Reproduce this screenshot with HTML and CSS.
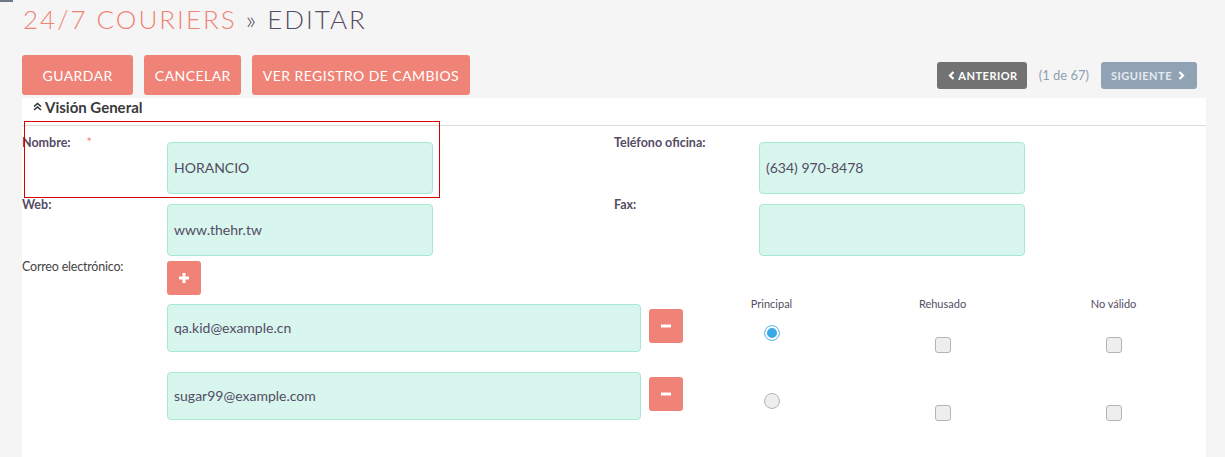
FILE: index.html
```html
<!DOCTYPE html>
<html>
<head>
    <title>24/7 Couriers » Editar</title>
    <link rel="stylesheet" href="styles.css">
</head>
<body>
    <div class="corner"></div>
    <div class="page">
        <h1 class="title"><span class="module">24/7 Couriers</span> <span class="sep">»</span> Editar</h1>

        <div class="toolbar">
            <div class="actions">
                <button class="btn btn-save">Guardar</button>
                <button class="btn">Cancelar</button>
                <button class="btn">Ver registro de cambios</button>
            </div>
            <div class="pager">
                <button class="nav nav-prev">
                    <svg width="7" height="9" viewBox="0 0 7 9"><path d="M5.5 1 L2 4.5 L5.5 8" fill="none" stroke="#fff" stroke-width="2.2"/></svg>
                    Anterior
                </button>
                <span class="count">(1 de 67)</span>
                <button class="nav nav-next">
                    Siguiente
                    <svg width="7" height="9" viewBox="0 0 7 9"><path d="M1.5 1 L5 4.5 L1.5 8" fill="none" stroke="#fff" stroke-width="2.2"/></svg>
                </button>
            </div>
        </div>

        <div class="panel">
            <div class="panel-head">
                <svg width="9" height="9" viewBox="0 0 9 9"><path d="M1 4.5 L4.5 1.5 L8 4.5 M1 8 L4.5 5 L8 8" fill="none" stroke="#333" stroke-width="1.6"/></svg>
                Visión General
            </div>

            <div class="panel-body">
                <div class="fields">
                    <div class="field">
                        <label>Nombre: <span class="req">*</span></label>
                        <div class="input">HORANCIO</div>
                    </div>
                    <div class="field">
                        <label>Teléfono oficina:</label>
                        <div class="input">(634) 970-8478</div>
                    </div>
                    <div class="field">
                        <label>Web:</label>
                        <div class="input">www.thehr.tw</div>
                    </div>
                    <div class="field">
                        <label>Fax:</label>
                        <div class="input"></div>
                    </div>
                </div>

                <div class="email-field">
                    <label>Correo electrónico:</label>
                    <div class="email-content">
                        <button class="icon-btn add">
                            <svg width="12" height="12" viewBox="0 0 12 12"><path d="M6 1 V11 M1 6 H11" stroke="#fff" stroke-width="3"/></svg>
                        </button>
                        <div class="email-list">
                            <div class="email-line">
                                <div class="input email-input">qa.kid@example.cn</div>
                                <button class="icon-btn remove">
                                    <svg width="12" height="4" viewBox="0 0 12 4"><path d="M1 2 H11" stroke="#fff" stroke-width="3"/></svg>
                                </button>
                                <div class="flag">
                                    <div class="flag-head">Principal</div>
                                    <input type="radio" name="primary" class="radio" checked>
                                </div>
                                <div class="flag">
                                    <div class="flag-head">Rehusado</div>
                                    <input type="checkbox" class="check">
                                </div>
                                <div class="flag">
                                    <div class="flag-head">No válido</div>
                                    <input type="checkbox" class="check">
                                </div>
                            </div>
                            <div class="email-line">
                                <div class="input email-input">sugar99@example.com</div>
                                <button class="icon-btn remove">
                                    <svg width="12" height="4" viewBox="0 0 12 4"><path d="M1 2 H11" stroke="#fff" stroke-width="3"/></svg>
                                </button>
                                <div class="flag">
                                    <div class="flag-head"></div>
                                    <input type="radio" name="primary" class="radio">
                                </div>
                                <div class="flag">
                                    <div class="flag-head"></div>
                                    <input type="checkbox" class="check">
                                </div>
                                <div class="flag">
                                    <div class="flag-head"></div>
                                    <input type="checkbox" class="check">
                                </div>
                            </div>
                        </div>
                    </div>
                </div>
            </div>

            <div class="focus-box"></div>
        </div>
    </div>
</body>
</html>
```

FILE: styles.css
```css
body {
    margin: 0;
    background-color: #f5f5f5;
    font-family: Lato, "Open Sans", sans-serif;
    color: #534d64;
}

.corner {
    position: absolute;
    top: 0;
    left: 0;
    width: 13px;
    height: 2px;
    background-color: #6b7886;
}

.page {
    padding: 0 19px 0 22px;
}

.title {
    margin: 0;
    padding-top: 4px;
    padding-left: 1px;
    font-size: 26px;
    line-height: 30px;
    font-weight: 300;
    letter-spacing: 2px;
    text-transform: uppercase;
    color: #534d64;
}

.title .module {
    color: #f08377;
}

.toolbar {
    display: flex;
    justify-content: space-between;
    align-items: center;
    margin-top: 21px;
}

.actions {
    display: flex;
    gap: 11px;
}

.btn {
    height: 40px;
    padding: 0 10.5px;
    border: none;
    border-radius: 3px;
    background-color: #f08377;
    color: #fff;
    font-family: Lato, sans-serif;
    font-size: 14px;
    letter-spacing: 0.45px;
    text-transform: uppercase;
}

.btn-save {
    padding: 0 20.5px;
}

.pager {
    display: flex;
    align-items: center;
    margin-right: 9px;
}

.nav {
    display: flex;
    align-items: center;
    gap: 3px;
    height: 27px;
    padding: 0 9px 0 11px;
    border: none;
    border-radius: 3px;
    color: #fff;
    font-family: Lato, sans-serif;
    font-size: 11px;
    font-weight: bold;
    letter-spacing: 0.5px;
    text-transform: uppercase;
}

.nav-prev {
    background-color: #727272;
}

.nav-next {
    gap: 6px;
    padding: 0 12px 0 10px;
    background-color: #8fa3b5;
    color: #e6ebf0;
}

.count {
    margin: 0 12px;
    font-size: 13px;
    color: #8fa0b3;
}

.panel {
    position: relative;
    margin-top: 3px;
    background-color: #fff;
}

.panel-head {
    display: flex;
    align-items: center;
    gap: 3px;
    height: 28px;
    padding-left: 11px;
    box-sizing: border-box;
    padding-bottom: 10px;
    border-bottom: 1px solid #ddd;
    font-size: 15px;
    font-weight: bold;
    line-height: 18px;
    color: #3a3a3a;
}

.panel-body {
    padding: 9px 0 40px;
}

.fields {
    display: grid;
    grid-template-columns: 592px 1fr;
    row-gap: 3px;
}

.field,
.email-field {
    display: flex;
}

label {
    flex: 0 0 145px;
    font-size: 12.5px;
    font-weight: bold;
    line-height: 16px;
}

.email-field label {
    font-weight: normal;
    color: #444;
    letter-spacing: -0.2px;
}

.req {
    margin-left: 13px;
    color: #f08377;
    font-weight: normal;
}

.input {
    box-sizing: border-box;
    width: 266px;
    height: 52px;
    margin-top: 7px;
    padding-left: 6px;
    border: 1px solid #a8e6d5;
    border-radius: 4px;
    background-color: #d8f5ee;
    font-size: 14px;
    line-height: 50px;
    color: #534d64;
}

.email-field {
    margin-top: 3px;
}

.icon-btn {
    display: flex;
    align-items: center;
    justify-content: center;
    width: 34px;
    height: 34px;
    padding: 0;
    border: none;
    border-radius: 3px;
    background-color: #f08377;
}

.add {
    margin-top: 2px;
}

.email-list {
    margin-top: 2px;
}

.email-line {
    display: flex;
    margin-bottom: 12px;
}

.email-input {
    width: 474px;
    height: 48px;
    line-height: 46px;
}

.remove {
    margin: 12px 3px 0 8px;
}

.flag {
    display: flex;
    flex-direction: column;
    align-items: center;
    width: 171px;
}

.flag-head {
    height: 14px;
    font-size: 11px;
    line-height: 14px;
}

.radio,
.check {
    appearance: none;
    width: 16px;
    height: 16px;
    margin: 0;
    border: 1px solid #b4b4b4;
    background-color: #eeeeef;
}

.radio {
    margin-top: 14px;
    border-radius: 50%;
}

.radio:checked {
    border-color: #7cc4ee;
    background-color: #3aa7e6;
    box-shadow: inset 0 0 0 2px #fff;
}

.check {
    margin-top: 26px;
    border-radius: 3px;
}

.focus-box {
    position: absolute;
    top: 23px;
    left: 2px;
    width: 414px;
    height: 75px;
    border: 1px solid #d90000;
}
```
